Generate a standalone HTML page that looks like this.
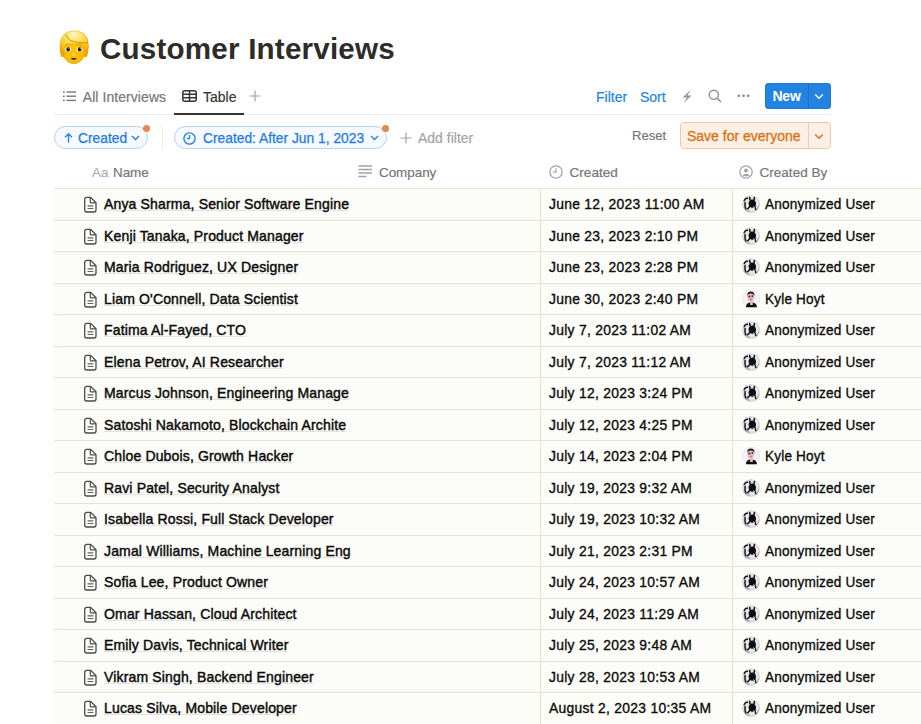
<!DOCTYPE html><html><head><meta charset="utf-8"><style>
*{margin:0;padding:0;box-sizing:border-box}
html,body{width:921px;height:724px;overflow:hidden;background:#fff}
body{position:relative;font-family:"Liberation Sans",sans-serif;color:#37352f}
.a{position:absolute;white-space:nowrap}
.title{left:100px;top:29px;font-size:29.6px;font-weight:bold;color:#2e2c28;letter-spacing:0.2px;line-height:40px}
.tab{font-size:14px;line-height:16px;top:88.5px;-webkit-text-stroke:0.2px currentColor}
.gray{color:#787774}
.blue{color:#2383e2}
.line{position:absolute;height:1px;background:#ededeb}
.pill{position:absolute;height:23px;border:1px solid #b3d3f3;background:#f6fafe;border-radius:12px}
.dot{position:absolute;width:7px;height:7px;border-radius:50%;background:#e4894a}
.ptxt{font-size:13.8px;line-height:16px;color:#1f7ade;-webkit-text-stroke:0.25px #1f7ade}
.hdr{font-size:13.4px;line-height:16px;top:165px;color:#787774;-webkit-text-stroke:0.2px currentColor}
.rowsbg{position:absolute;left:54px;width:867px;background:#fcfcf8}
.hl{position:absolute;left:54px;width:867px;height:1px;background:#e4e3da}
.vl{position:absolute;width:1px;height:600px;background:#e4e3da}
.r{position:absolute;left:0;width:921px;height:18px;font-size:14.6px;line-height:18px;color:#0b0b0b}
.r span{position:absolute;white-space:nowrap}
.pgw{left:84.2px}
.pg{display:block}
.nm{left:104px;font-size:14.8px;letter-spacing:0.15px;transform:scaleX(0.948);transform-origin:0 0;-webkit-text-stroke:0.45px #0b0b0b}
.nm u{text-decoration:underline;text-decoration-color:#e4e3dd;text-underline-offset:1.2px;text-decoration-thickness:1px}
.dt{left:549px;letter-spacing:0.3px;transform:scaleX(0.95);transform-origin:0 0;-webkit-text-stroke:0.35px #0b0b0b}
.avw{left:742.1px}
.av{display:block}
.us{left:765px;letter-spacing:0.2px;transform:scaleX(0.93);transform-origin:0 0;-webkit-text-stroke:0.35px #0b0b0b}
</style></head><body>
<svg class="a" style="left:56px;top:28px" width="36" height="38" viewBox="0 0 36 38">
<defs><radialGradient id="hg" cx="0.5" cy="0.15" r="0.75"><stop offset="0" stop-color="#fff6c8"/><stop offset="0.35" stop-color="#fde36c"/><stop offset="0.8" stop-color="#f6c21c"/><stop offset="1" stop-color="#eaa800"/></radialGradient>
<radialGradient id="fg" cx="0.5" cy="0.5" r="0.6"><stop offset="0" stop-color="#fcc400"/><stop offset="0.75" stop-color="#f7bb00"/><stop offset="1" stop-color="#e59a00"/></radialGradient></defs>
<path d="M5.2 28.5C3.6 22 3.6 16 5.3 11C7.6 5.2 12.6 2.9 18.4 2.9C24.2 2.9 29.2 5.2 31.2 10.5C33 15.5 32.6 22 30.8 28.5z" fill="#e8a300"/>
<ellipse cx="17.9" cy="21.2" rx="11.6" ry="14.6" fill="url(#fg)" stroke="#e39800" stroke-width="0.5"/>
<path d="M5.2 28.5C3.6 22 3.6 16 5.3 11C7.6 5.2 12.6 2.9 18.4 2.9C24.2 2.9 29.2 5.2 31.2 10.5C33 15.5 32.6 22 30.8 28.5L28.6 28.5C28.6 22 28.5 17.8 26.5 15.9C22 15 14 15.8 9.8 16.4C8.3 19 8 23.5 8 28.5z" fill="url(#hg)" stroke="#e7a400" stroke-width="0.4"/>
<path d="M9.8 6.6C11 9 12.6 12 16 13.2C21 14.6 27 14.8 32 15.1" stroke="#c88a00" stroke-width="1" fill="none" opacity="0.85"/>
<path d="M9.6 17.2C10.8 16.6 12.5 16.5 14 17M21.6 17C23.1 16.5 24.8 16.6 26 17.2" stroke="#e09a00" stroke-width="0.7" fill="none"/>
<ellipse cx="12.1" cy="21.6" rx="3.1" ry="2.3" fill="#fff8d8"/><ellipse cx="12.2" cy="21.4" rx="1.9" ry="2.1" fill="#1e1710"/><circle cx="12.8" cy="20.7" r="0.5" fill="#fff"/>
<ellipse cx="23.6" cy="21.6" rx="3.1" ry="2.3" fill="#fff8d8"/><ellipse cx="23.7" cy="21.4" rx="1.9" ry="2.1" fill="#1e1710"/><circle cx="24.3" cy="20.7" r="0.5" fill="#fff"/>
<ellipse cx="17.8" cy="26.4" rx="1.5" ry="1.2" fill="#fddd70"/>
<path d="M15.1 29.9h5.4c-.2 1.3-1.2 2-2.7 2s-2.5-.7-2.7-2z" fill="#4a2c0c"/>
</svg>
<div class="a title">Customer Interviews</div>
<svg class="a" style="left:63px;top:91px" width="14" height="11" viewBox="0 0 14 11"><g fill="#787774"><rect x="0" y="0.3" width="1.7" height="1.5"/><rect x="0" y="4.5" width="1.7" height="1.5"/><rect x="0" y="8.7" width="1.7" height="1.5"/><rect x="3.5" y="0.3" width="9.5" height="1.4"/><rect x="3.5" y="4.5" width="9.5" height="1.4"/><rect x="3.5" y="8.7" width="9.5" height="1.4"/></g></svg>
<div class="a tab gray" style="left:82.8px;font-size:14px;letter-spacing:0.06px">All Interviews</div>
<svg class="a" style="left:182px;top:90px" width="15" height="12" viewBox="0 0 15 12"><rect x="0.75" y="0.75" width="13.5" height="10.5" rx="2" fill="none" stroke="#37352f" stroke-width="1.5"/><path d="M1 4.3h13M1 7.7h13M7.5 1v10" stroke="#37352f" stroke-width="1.4"/></svg>
<div class="a tab" style="left:203px;color:#37352f">Table</div>
<svg class="a" style="left:249px;top:90px" width="12" height="12" viewBox="0 0 12 12"><path d="M6 0.5v11M0.5 6h11" stroke="#a5a4a0" stroke-width="1.2"/></svg>
<div class="line" style="left:54px;top:114px;width:777px"></div>
<div class="a" style="left:174px;top:113px;width:70px;height:2px;background:#37352f"></div>
<div class="a tab blue" style="left:596px">Filter</div>
<div class="a tab blue" style="left:640px">Sort</div>
<svg class="a" style="left:681px;top:88.5px" width="12" height="15" viewBox="0 0 12 15"><path d="M9.6 0.8L1.6 8.4h4.3L2.6 14.2l8-7.8H6.5z" fill="#9b9a96"/></svg>
<svg class="a" style="left:708px;top:88.7px" width="14" height="14" viewBox="0 0 14 14"><circle cx="5.8" cy="5.8" r="4.6" fill="none" stroke="#8f8e8a" stroke-width="1.4"/><path d="M9.2 9.2l3.8 3.8" stroke="#8f8e8a" stroke-width="1.5"/></svg>
<svg class="a" style="left:736px;top:94px" width="15" height="4" viewBox="0 0 15 4"><circle cx="2.9" cy="1.8" r="1.4" fill="#8f8e8a"/><circle cx="7.5" cy="1.8" r="1.4" fill="#8f8e8a"/><circle cx="12.1" cy="1.8" r="1.4" fill="#8f8e8a"/></svg>
<div class="a" style="left:765px;top:82.5px;width:65.5px;height:26.3px;background:#2383e2;border-radius:4px;box-shadow:inset 0 0 0 0.6px #1a72cf"></div>
<div class="a" style="left:808px;top:83px;width:1px;height:25.5px;background:#1f70c4"></div>
<div class="a" style="left:772.5px;top:88px;font-size:14px;line-height:16px;font-weight:bold;color:#fff;letter-spacing:-0.25px">New</div>
<svg class="a" style="left:814px;top:92.8px" width="10" height="7" viewBox="0 0 10 7"><path d="M1.2 1.5l3.8 3.8 3.8-3.8" fill="none" stroke="#fff" stroke-width="1.4"/></svg>

<div class="pill" style="left:54px;top:126px;width:94px"></div>
<div class="dot" style="left:142.5px;top:125px"></div>
<svg class="a" style="left:64px;top:132.5px" width="9" height="10" viewBox="0 0 9 10"><path d="M4.5 9.5V1M1 4.3l3.5-3.5 3.5 3.5" fill="none" stroke="#2383e2" stroke-width="1.4"/></svg>
<div class="a ptxt" style="left:78px;top:130.5px">Created</div>
<svg class="a" style="left:131px;top:135px" width="9" height="6" viewBox="0 0 9 6"><path d="M1 1l3.5 3.5L8 1" fill="none" stroke="#2383e2" stroke-width="1.3"/></svg>
<div class="a" style="left:161.5px;top:126px;width:1px;height:23px;background:#ededeb"></div>
<div class="pill" style="left:174px;top:126px;width:213px"></div>
<div class="dot" style="left:382px;top:125px"></div>
<svg class="a" style="left:183px;top:131.5px" width="13" height="13" viewBox="0 0 13 13"><circle cx="6.5" cy="6.5" r="5.6" fill="none" stroke="#2383e2" stroke-width="1.4"/><path d="M6.5 3v3.6H3.8" fill="none" stroke="#2383e2" stroke-width="1.3"/></svg>
<div class="a ptxt" style="left:203px;top:130.5px">Created: After Jun 1, 2023</div>
<svg class="a" style="left:370px;top:135px" width="9" height="6" viewBox="0 0 9 6"><path d="M1 1l3.5 3.5L8 1" fill="none" stroke="#2383e2" stroke-width="1.3"/></svg>
<svg class="a" style="left:400px;top:132px" width="12" height="12" viewBox="0 0 12 12"><path d="M6 0.5v11M0.5 6h11" stroke="#a5a4a0" stroke-width="1.2"/></svg>
<div class="a tab gray" style="left:418px;top:130px;color:#a5a4a0">Add filter</div>
<div class="a tab gray" style="left:632px;top:128px;font-size:13.1px">Reset</div>
<div class="a" style="left:680px;top:122px;width:150.5px;height:26.5px;background:#fcf0e6;border:1px solid #f3c9a5;border-radius:4px"></div>
<div class="a" style="left:808px;top:122.5px;width:1px;height:25.5px;background:#f3c9a5"></div>
<div class="a" style="left:687px;top:128px;font-size:14px;line-height:16px;color:#d9730d;-webkit-text-stroke:0.3px #d9730d">Save for everyone</div>
<svg class="a" style="left:814px;top:133px" width="10" height="7" viewBox="0 0 10 7"><path d="M1.2 1.5l3.8 3.8 3.8-3.8" fill="none" stroke="#d9730d" stroke-width="1.4"/></svg>

<div class="a hdr" style="left:92px;color:#a8a7a3;-webkit-text-stroke:0">Aa</div>
<div class="a hdr" style="left:113px">Name</div>
<svg class="a" style="left:358px;top:165px" width="15" height="13" viewBox="0 0 15 13"><path d="M0.5 1h13.5M0.5 4.5h13.5M0.5 8h13.5M0.5 11.5h8" stroke="#a5a4a0" stroke-width="1.3"/></svg>
<div class="a hdr" style="left:379px">Company</div>
<svg class="a" style="left:549px;top:165px" width="14" height="14" viewBox="0 0 14 14"><circle cx="7" cy="7" r="6.2" fill="none" stroke="#a5a4a0" stroke-width="1.3"/><path d="M7 3.2v4H4.2" fill="none" stroke="#a5a4a0" stroke-width="1.2"/></svg>
<div class="a hdr" style="left:569.5px;font-size:13.6px">Created</div>
<svg class="a" style="left:739px;top:165px" width="14" height="14" viewBox="0 0 14 14"><circle cx="7" cy="7" r="6.2" fill="none" stroke="#a5a4a0" stroke-width="1.3"/><circle cx="7" cy="5.6" r="2" fill="#a5a4a0"/><path d="M3 11.2c1-1.6 2.3-2.2 4-2.2s3 .6 4 2.2" fill="#a5a4a0"/></svg>
<div class="a hdr" style="left:759.5px;font-size:13.55px">Created By</div>

<div class="rowsbg" style="top:188.30px;height:535.70px"></div>
<div class="hl" style="top:188.30px"></div>
<div class="r" style="top:195.10px">
<span class="pgw" style="top:1.00px"><svg class="pg" width="14" height="18" viewBox="0 0 14 18"><path d="M2.7 1.35H6.7L12 6.7V14c0 1.1-.9 2-2 2H2.7c-1.1 0-2-.9-2-2V3.35c0-1.1.9-2 2-2z" fill="#fefefc" stroke="#4a4a48" stroke-width="1.3" stroke-linejoin="round"/><path d="M6.3 1.6V5.9c0 .5.4.9.9.9h4.6" fill="none" stroke="#4a4a48" stroke-width="1.2"/><path d="M3.5 9.8H9.4M3.5 12.5H9.4" stroke="#5f6166" stroke-width="1.15"/></svg></span>
<span class="nm"><u>Anya Sharma, Senior Software Engine</u></span>
<span class="dt">June 12, 2023 11:00 AM</span>
<span class="avw" style="top:0.10px"><svg class="av" width="18" height="18" viewBox="0 0 18 18"><circle cx="9" cy="9" r="8.7" fill="#c4c4c4"/><circle cx="9" cy="9" r="8" fill="#e6e6e6"/><path d="M1.8 12.5c1.5 2 3.2 3.4 6 4M14.2 15.2c1.4-1.3 2.3-2.8 2.7-4.8" stroke="#b0b0b0" stroke-width="1.3" fill="none"/><path d="M6.6 8.6c0-2.4 1.5-4.2 3.6-4.2s3.8 1.8 3.8 4.3c0 2.3-1.5 4.1-3.6 4.1S6.6 11 6.6 8.6z" fill="#0c0c0c"/><path d="M8 4.8L7.7 2.4M12.1 4.9L12.4 2.6M12.6 11l1.2 3.6M7.8 11.6L5.7 13.8" stroke="#0c0c0c" stroke-width="1.5" stroke-linecap="round"/><path d="M2.3 5.6C2.9 3.9 4 3.1 5.4 3.3M3.1 7.4C2.7 9.5 2.9 12 3.9 13.8" stroke="#151515" stroke-width="1.5" fill="none" stroke-linecap="round"/><path d="M11.2 11.5l2 1.8" stroke="#eee" stroke-width="0.9"/></svg></span>
<span class="us">Anonymized User</span>
</div>
<div class="hl" style="top:219.80px"></div>
<div class="r" style="top:226.60px">
<span class="pgw" style="top:1.00px"><svg class="pg" width="14" height="18" viewBox="0 0 14 18"><path d="M2.7 1.35H6.7L12 6.7V14c0 1.1-.9 2-2 2H2.7c-1.1 0-2-.9-2-2V3.35c0-1.1.9-2 2-2z" fill="#fefefc" stroke="#4a4a48" stroke-width="1.3" stroke-linejoin="round"/><path d="M6.3 1.6V5.9c0 .5.4.9.9.9h4.6" fill="none" stroke="#4a4a48" stroke-width="1.2"/><path d="M3.5 9.8H9.4M3.5 12.5H9.4" stroke="#5f6166" stroke-width="1.15"/></svg></span>
<span class="nm"><u>Kenji Tanaka, Product Manager</u></span>
<span class="dt">June 23, 2023 2:10 PM</span>
<span class="avw" style="top:0.10px"><svg class="av" width="18" height="18" viewBox="0 0 18 18"><circle cx="9" cy="9" r="8.7" fill="#c4c4c4"/><circle cx="9" cy="9" r="8" fill="#e6e6e6"/><path d="M1.8 12.5c1.5 2 3.2 3.4 6 4M14.2 15.2c1.4-1.3 2.3-2.8 2.7-4.8" stroke="#b0b0b0" stroke-width="1.3" fill="none"/><path d="M6.6 8.6c0-2.4 1.5-4.2 3.6-4.2s3.8 1.8 3.8 4.3c0 2.3-1.5 4.1-3.6 4.1S6.6 11 6.6 8.6z" fill="#0c0c0c"/><path d="M8 4.8L7.7 2.4M12.1 4.9L12.4 2.6M12.6 11l1.2 3.6M7.8 11.6L5.7 13.8" stroke="#0c0c0c" stroke-width="1.5" stroke-linecap="round"/><path d="M2.3 5.6C2.9 3.9 4 3.1 5.4 3.3M3.1 7.4C2.7 9.5 2.9 12 3.9 13.8" stroke="#151515" stroke-width="1.5" fill="none" stroke-linecap="round"/><path d="M11.2 11.5l2 1.8" stroke="#eee" stroke-width="0.9"/></svg></span>
<span class="us">Anonymized User</span>
</div>
<div class="hl" style="top:251.30px"></div>
<div class="r" style="top:258.10px">
<span class="pgw" style="top:1.00px"><svg class="pg" width="14" height="18" viewBox="0 0 14 18"><path d="M2.7 1.35H6.7L12 6.7V14c0 1.1-.9 2-2 2H2.7c-1.1 0-2-.9-2-2V3.35c0-1.1.9-2 2-2z" fill="#fefefc" stroke="#4a4a48" stroke-width="1.3" stroke-linejoin="round"/><path d="M6.3 1.6V5.9c0 .5.4.9.9.9h4.6" fill="none" stroke="#4a4a48" stroke-width="1.2"/><path d="M3.5 9.8H9.4M3.5 12.5H9.4" stroke="#5f6166" stroke-width="1.15"/></svg></span>
<span class="nm"><u>Maria Rodriguez, UX Designer</u></span>
<span class="dt">June 23, 2023 2:28 PM</span>
<span class="avw" style="top:0.10px"><svg class="av" width="18" height="18" viewBox="0 0 18 18"><circle cx="9" cy="9" r="8.7" fill="#c4c4c4"/><circle cx="9" cy="9" r="8" fill="#e6e6e6"/><path d="M1.8 12.5c1.5 2 3.2 3.4 6 4M14.2 15.2c1.4-1.3 2.3-2.8 2.7-4.8" stroke="#b0b0b0" stroke-width="1.3" fill="none"/><path d="M6.6 8.6c0-2.4 1.5-4.2 3.6-4.2s3.8 1.8 3.8 4.3c0 2.3-1.5 4.1-3.6 4.1S6.6 11 6.6 8.6z" fill="#0c0c0c"/><path d="M8 4.8L7.7 2.4M12.1 4.9L12.4 2.6M12.6 11l1.2 3.6M7.8 11.6L5.7 13.8" stroke="#0c0c0c" stroke-width="1.5" stroke-linecap="round"/><path d="M2.3 5.6C2.9 3.9 4 3.1 5.4 3.3M3.1 7.4C2.7 9.5 2.9 12 3.9 13.8" stroke="#151515" stroke-width="1.5" fill="none" stroke-linecap="round"/><path d="M11.2 11.5l2 1.8" stroke="#eee" stroke-width="0.9"/></svg></span>
<span class="us">Anonymized User</span>
</div>
<div class="hl" style="top:282.80px"></div>
<div class="r" style="top:289.60px">
<span class="pgw" style="top:1.00px"><svg class="pg" width="14" height="18" viewBox="0 0 14 18"><path d="M2.7 1.35H6.7L12 6.7V14c0 1.1-.9 2-2 2H2.7c-1.1 0-2-.9-2-2V3.35c0-1.1.9-2 2-2z" fill="#fefefc" stroke="#4a4a48" stroke-width="1.3" stroke-linejoin="round"/><path d="M6.3 1.6V5.9c0 .5.4.9.9.9h4.6" fill="none" stroke="#4a4a48" stroke-width="1.2"/><path d="M3.5 9.8H9.4M3.5 12.5H9.4" stroke="#5f6166" stroke-width="1.15"/></svg></span>
<span class="nm"><u>Liam O'Connell, Data Scientist</u></span>
<span class="dt">June 30, 2023 2:40 PM</span>
<span class="avw" style="top:0.10px"><svg class="av" width="18" height="18" viewBox="0 0 18 18"><circle cx="9" cy="9" r="8.8" fill="#f4f3f4" stroke="#e4e2e6" stroke-width="0.6"/><path d="M3.8 17.2c.4-2.8 1.8-4.3 4.2-4.6h2.4c2.6.3 4.2 1.8 4.6 4.6z" fill="#141010"/><rect x="8" y="11" width="2.8" height="4" fill="#e6b6bc"/><ellipse cx="8.8" cy="7" rx="3.5" ry="4.7" fill="#e9b8c0"/><path d="M5.2 6C5 3 6.6 1.6 8.8 1.6S12.8 3 12.5 6c-.6-1.6-1.9-2.6-3.7-2.6S5.8 4.4 5.2 6z" fill="#2a1a18"/><circle cx="7.4" cy="6.4" r="0.9" fill="#2a1a18"/><circle cx="10.3" cy="6.1" r="0.9" fill="#2a1a18"/><ellipse cx="9" cy="9.4" rx="1.2" ry="0.8" fill="#b57f86"/></svg></span>
<span class="us">Kyle Hoyt</span>
</div>
<div class="hl" style="top:314.30px"></div>
<div class="r" style="top:321.10px">
<span class="pgw" style="top:1.00px"><svg class="pg" width="14" height="18" viewBox="0 0 14 18"><path d="M2.7 1.35H6.7L12 6.7V14c0 1.1-.9 2-2 2H2.7c-1.1 0-2-.9-2-2V3.35c0-1.1.9-2 2-2z" fill="#fefefc" stroke="#4a4a48" stroke-width="1.3" stroke-linejoin="round"/><path d="M6.3 1.6V5.9c0 .5.4.9.9.9h4.6" fill="none" stroke="#4a4a48" stroke-width="1.2"/><path d="M3.5 9.8H9.4M3.5 12.5H9.4" stroke="#5f6166" stroke-width="1.15"/></svg></span>
<span class="nm"><u>Fatima Al-Fayed, CTO</u></span>
<span class="dt">July 7, 2023 11:02 AM</span>
<span class="avw" style="top:0.10px"><svg class="av" width="18" height="18" viewBox="0 0 18 18"><circle cx="9" cy="9" r="8.7" fill="#c4c4c4"/><circle cx="9" cy="9" r="8" fill="#e6e6e6"/><path d="M1.8 12.5c1.5 2 3.2 3.4 6 4M14.2 15.2c1.4-1.3 2.3-2.8 2.7-4.8" stroke="#b0b0b0" stroke-width="1.3" fill="none"/><path d="M6.6 8.6c0-2.4 1.5-4.2 3.6-4.2s3.8 1.8 3.8 4.3c0 2.3-1.5 4.1-3.6 4.1S6.6 11 6.6 8.6z" fill="#0c0c0c"/><path d="M8 4.8L7.7 2.4M12.1 4.9L12.4 2.6M12.6 11l1.2 3.6M7.8 11.6L5.7 13.8" stroke="#0c0c0c" stroke-width="1.5" stroke-linecap="round"/><path d="M2.3 5.6C2.9 3.9 4 3.1 5.4 3.3M3.1 7.4C2.7 9.5 2.9 12 3.9 13.8" stroke="#151515" stroke-width="1.5" fill="none" stroke-linecap="round"/><path d="M11.2 11.5l2 1.8" stroke="#eee" stroke-width="0.9"/></svg></span>
<span class="us">Anonymized User</span>
</div>
<div class="hl" style="top:345.80px"></div>
<div class="r" style="top:352.60px">
<span class="pgw" style="top:1.00px"><svg class="pg" width="14" height="18" viewBox="0 0 14 18"><path d="M2.7 1.35H6.7L12 6.7V14c0 1.1-.9 2-2 2H2.7c-1.1 0-2-.9-2-2V3.35c0-1.1.9-2 2-2z" fill="#fefefc" stroke="#4a4a48" stroke-width="1.3" stroke-linejoin="round"/><path d="M6.3 1.6V5.9c0 .5.4.9.9.9h4.6" fill="none" stroke="#4a4a48" stroke-width="1.2"/><path d="M3.5 9.8H9.4M3.5 12.5H9.4" stroke="#5f6166" stroke-width="1.15"/></svg></span>
<span class="nm"><u>Elena Petrov, AI Researcher</u></span>
<span class="dt">July 7, 2023 11:12 AM</span>
<span class="avw" style="top:0.10px"><svg class="av" width="18" height="18" viewBox="0 0 18 18"><circle cx="9" cy="9" r="8.7" fill="#c4c4c4"/><circle cx="9" cy="9" r="8" fill="#e6e6e6"/><path d="M1.8 12.5c1.5 2 3.2 3.4 6 4M14.2 15.2c1.4-1.3 2.3-2.8 2.7-4.8" stroke="#b0b0b0" stroke-width="1.3" fill="none"/><path d="M6.6 8.6c0-2.4 1.5-4.2 3.6-4.2s3.8 1.8 3.8 4.3c0 2.3-1.5 4.1-3.6 4.1S6.6 11 6.6 8.6z" fill="#0c0c0c"/><path d="M8 4.8L7.7 2.4M12.1 4.9L12.4 2.6M12.6 11l1.2 3.6M7.8 11.6L5.7 13.8" stroke="#0c0c0c" stroke-width="1.5" stroke-linecap="round"/><path d="M2.3 5.6C2.9 3.9 4 3.1 5.4 3.3M3.1 7.4C2.7 9.5 2.9 12 3.9 13.8" stroke="#151515" stroke-width="1.5" fill="none" stroke-linecap="round"/><path d="M11.2 11.5l2 1.8" stroke="#eee" stroke-width="0.9"/></svg></span>
<span class="us">Anonymized User</span>
</div>
<div class="hl" style="top:377.30px"></div>
<div class="r" style="top:384.10px">
<span class="pgw" style="top:1.00px"><svg class="pg" width="14" height="18" viewBox="0 0 14 18"><path d="M2.7 1.35H6.7L12 6.7V14c0 1.1-.9 2-2 2H2.7c-1.1 0-2-.9-2-2V3.35c0-1.1.9-2 2-2z" fill="#fefefc" stroke="#4a4a48" stroke-width="1.3" stroke-linejoin="round"/><path d="M6.3 1.6V5.9c0 .5.4.9.9.9h4.6" fill="none" stroke="#4a4a48" stroke-width="1.2"/><path d="M3.5 9.8H9.4M3.5 12.5H9.4" stroke="#5f6166" stroke-width="1.15"/></svg></span>
<span class="nm"><u>Marcus Johnson, Engineering Manage</u></span>
<span class="dt">July 12, 2023 3:24 PM</span>
<span class="avw" style="top:0.10px"><svg class="av" width="18" height="18" viewBox="0 0 18 18"><circle cx="9" cy="9" r="8.7" fill="#c4c4c4"/><circle cx="9" cy="9" r="8" fill="#e6e6e6"/><path d="M1.8 12.5c1.5 2 3.2 3.4 6 4M14.2 15.2c1.4-1.3 2.3-2.8 2.7-4.8" stroke="#b0b0b0" stroke-width="1.3" fill="none"/><path d="M6.6 8.6c0-2.4 1.5-4.2 3.6-4.2s3.8 1.8 3.8 4.3c0 2.3-1.5 4.1-3.6 4.1S6.6 11 6.6 8.6z" fill="#0c0c0c"/><path d="M8 4.8L7.7 2.4M12.1 4.9L12.4 2.6M12.6 11l1.2 3.6M7.8 11.6L5.7 13.8" stroke="#0c0c0c" stroke-width="1.5" stroke-linecap="round"/><path d="M2.3 5.6C2.9 3.9 4 3.1 5.4 3.3M3.1 7.4C2.7 9.5 2.9 12 3.9 13.8" stroke="#151515" stroke-width="1.5" fill="none" stroke-linecap="round"/><path d="M11.2 11.5l2 1.8" stroke="#eee" stroke-width="0.9"/></svg></span>
<span class="us">Anonymized User</span>
</div>
<div class="hl" style="top:408.80px"></div>
<div class="r" style="top:415.60px">
<span class="pgw" style="top:1.00px"><svg class="pg" width="14" height="18" viewBox="0 0 14 18"><path d="M2.7 1.35H6.7L12 6.7V14c0 1.1-.9 2-2 2H2.7c-1.1 0-2-.9-2-2V3.35c0-1.1.9-2 2-2z" fill="#fefefc" stroke="#4a4a48" stroke-width="1.3" stroke-linejoin="round"/><path d="M6.3 1.6V5.9c0 .5.4.9.9.9h4.6" fill="none" stroke="#4a4a48" stroke-width="1.2"/><path d="M3.5 9.8H9.4M3.5 12.5H9.4" stroke="#5f6166" stroke-width="1.15"/></svg></span>
<span class="nm"><u>Satoshi Nakamoto, Blockchain Archite</u></span>
<span class="dt">July 12, 2023 4:25 PM</span>
<span class="avw" style="top:0.10px"><svg class="av" width="18" height="18" viewBox="0 0 18 18"><circle cx="9" cy="9" r="8.7" fill="#c4c4c4"/><circle cx="9" cy="9" r="8" fill="#e6e6e6"/><path d="M1.8 12.5c1.5 2 3.2 3.4 6 4M14.2 15.2c1.4-1.3 2.3-2.8 2.7-4.8" stroke="#b0b0b0" stroke-width="1.3" fill="none"/><path d="M6.6 8.6c0-2.4 1.5-4.2 3.6-4.2s3.8 1.8 3.8 4.3c0 2.3-1.5 4.1-3.6 4.1S6.6 11 6.6 8.6z" fill="#0c0c0c"/><path d="M8 4.8L7.7 2.4M12.1 4.9L12.4 2.6M12.6 11l1.2 3.6M7.8 11.6L5.7 13.8" stroke="#0c0c0c" stroke-width="1.5" stroke-linecap="round"/><path d="M2.3 5.6C2.9 3.9 4 3.1 5.4 3.3M3.1 7.4C2.7 9.5 2.9 12 3.9 13.8" stroke="#151515" stroke-width="1.5" fill="none" stroke-linecap="round"/><path d="M11.2 11.5l2 1.8" stroke="#eee" stroke-width="0.9"/></svg></span>
<span class="us">Anonymized User</span>
</div>
<div class="hl" style="top:440.30px"></div>
<div class="r" style="top:447.10px">
<span class="pgw" style="top:1.00px"><svg class="pg" width="14" height="18" viewBox="0 0 14 18"><path d="M2.7 1.35H6.7L12 6.7V14c0 1.1-.9 2-2 2H2.7c-1.1 0-2-.9-2-2V3.35c0-1.1.9-2 2-2z" fill="#fefefc" stroke="#4a4a48" stroke-width="1.3" stroke-linejoin="round"/><path d="M6.3 1.6V5.9c0 .5.4.9.9.9h4.6" fill="none" stroke="#4a4a48" stroke-width="1.2"/><path d="M3.5 9.8H9.4M3.5 12.5H9.4" stroke="#5f6166" stroke-width="1.15"/></svg></span>
<span class="nm"><u>Chloe Dubois, Growth Hacker</u></span>
<span class="dt">July 14, 2023 2:04 PM</span>
<span class="avw" style="top:0.10px"><svg class="av" width="18" height="18" viewBox="0 0 18 18"><circle cx="9" cy="9" r="8.8" fill="#f4f3f4" stroke="#e4e2e6" stroke-width="0.6"/><path d="M3.8 17.2c.4-2.8 1.8-4.3 4.2-4.6h2.4c2.6.3 4.2 1.8 4.6 4.6z" fill="#141010"/><rect x="8" y="11" width="2.8" height="4" fill="#e6b6bc"/><ellipse cx="8.8" cy="7" rx="3.5" ry="4.7" fill="#e9b8c0"/><path d="M5.2 6C5 3 6.6 1.6 8.8 1.6S12.8 3 12.5 6c-.6-1.6-1.9-2.6-3.7-2.6S5.8 4.4 5.2 6z" fill="#2a1a18"/><circle cx="7.4" cy="6.4" r="0.9" fill="#2a1a18"/><circle cx="10.3" cy="6.1" r="0.9" fill="#2a1a18"/><ellipse cx="9" cy="9.4" rx="1.2" ry="0.8" fill="#b57f86"/></svg></span>
<span class="us">Kyle Hoyt</span>
</div>
<div class="hl" style="top:471.80px"></div>
<div class="r" style="top:478.60px">
<span class="pgw" style="top:1.00px"><svg class="pg" width="14" height="18" viewBox="0 0 14 18"><path d="M2.7 1.35H6.7L12 6.7V14c0 1.1-.9 2-2 2H2.7c-1.1 0-2-.9-2-2V3.35c0-1.1.9-2 2-2z" fill="#fefefc" stroke="#4a4a48" stroke-width="1.3" stroke-linejoin="round"/><path d="M6.3 1.6V5.9c0 .5.4.9.9.9h4.6" fill="none" stroke="#4a4a48" stroke-width="1.2"/><path d="M3.5 9.8H9.4M3.5 12.5H9.4" stroke="#5f6166" stroke-width="1.15"/></svg></span>
<span class="nm"><u>Ravi Patel, Security Analyst</u></span>
<span class="dt">July 19, 2023 9:32 AM</span>
<span class="avw" style="top:0.10px"><svg class="av" width="18" height="18" viewBox="0 0 18 18"><circle cx="9" cy="9" r="8.7" fill="#c4c4c4"/><circle cx="9" cy="9" r="8" fill="#e6e6e6"/><path d="M1.8 12.5c1.5 2 3.2 3.4 6 4M14.2 15.2c1.4-1.3 2.3-2.8 2.7-4.8" stroke="#b0b0b0" stroke-width="1.3" fill="none"/><path d="M6.6 8.6c0-2.4 1.5-4.2 3.6-4.2s3.8 1.8 3.8 4.3c0 2.3-1.5 4.1-3.6 4.1S6.6 11 6.6 8.6z" fill="#0c0c0c"/><path d="M8 4.8L7.7 2.4M12.1 4.9L12.4 2.6M12.6 11l1.2 3.6M7.8 11.6L5.7 13.8" stroke="#0c0c0c" stroke-width="1.5" stroke-linecap="round"/><path d="M2.3 5.6C2.9 3.9 4 3.1 5.4 3.3M3.1 7.4C2.7 9.5 2.9 12 3.9 13.8" stroke="#151515" stroke-width="1.5" fill="none" stroke-linecap="round"/><path d="M11.2 11.5l2 1.8" stroke="#eee" stroke-width="0.9"/></svg></span>
<span class="us">Anonymized User</span>
</div>
<div class="hl" style="top:503.30px"></div>
<div class="r" style="top:510.10px">
<span class="pgw" style="top:1.00px"><svg class="pg" width="14" height="18" viewBox="0 0 14 18"><path d="M2.7 1.35H6.7L12 6.7V14c0 1.1-.9 2-2 2H2.7c-1.1 0-2-.9-2-2V3.35c0-1.1.9-2 2-2z" fill="#fefefc" stroke="#4a4a48" stroke-width="1.3" stroke-linejoin="round"/><path d="M6.3 1.6V5.9c0 .5.4.9.9.9h4.6" fill="none" stroke="#4a4a48" stroke-width="1.2"/><path d="M3.5 9.8H9.4M3.5 12.5H9.4" stroke="#5f6166" stroke-width="1.15"/></svg></span>
<span class="nm"><u>Isabella Rossi, Full Stack Developer</u></span>
<span class="dt">July 19, 2023 10:32 AM</span>
<span class="avw" style="top:0.10px"><svg class="av" width="18" height="18" viewBox="0 0 18 18"><circle cx="9" cy="9" r="8.7" fill="#c4c4c4"/><circle cx="9" cy="9" r="8" fill="#e6e6e6"/><path d="M1.8 12.5c1.5 2 3.2 3.4 6 4M14.2 15.2c1.4-1.3 2.3-2.8 2.7-4.8" stroke="#b0b0b0" stroke-width="1.3" fill="none"/><path d="M6.6 8.6c0-2.4 1.5-4.2 3.6-4.2s3.8 1.8 3.8 4.3c0 2.3-1.5 4.1-3.6 4.1S6.6 11 6.6 8.6z" fill="#0c0c0c"/><path d="M8 4.8L7.7 2.4M12.1 4.9L12.4 2.6M12.6 11l1.2 3.6M7.8 11.6L5.7 13.8" stroke="#0c0c0c" stroke-width="1.5" stroke-linecap="round"/><path d="M2.3 5.6C2.9 3.9 4 3.1 5.4 3.3M3.1 7.4C2.7 9.5 2.9 12 3.9 13.8" stroke="#151515" stroke-width="1.5" fill="none" stroke-linecap="round"/><path d="M11.2 11.5l2 1.8" stroke="#eee" stroke-width="0.9"/></svg></span>
<span class="us">Anonymized User</span>
</div>
<div class="hl" style="top:534.80px"></div>
<div class="r" style="top:541.60px">
<span class="pgw" style="top:1.00px"><svg class="pg" width="14" height="18" viewBox="0 0 14 18"><path d="M2.7 1.35H6.7L12 6.7V14c0 1.1-.9 2-2 2H2.7c-1.1 0-2-.9-2-2V3.35c0-1.1.9-2 2-2z" fill="#fefefc" stroke="#4a4a48" stroke-width="1.3" stroke-linejoin="round"/><path d="M6.3 1.6V5.9c0 .5.4.9.9.9h4.6" fill="none" stroke="#4a4a48" stroke-width="1.2"/><path d="M3.5 9.8H9.4M3.5 12.5H9.4" stroke="#5f6166" stroke-width="1.15"/></svg></span>
<span class="nm"><u>Jamal Williams, Machine Learning Eng</u></span>
<span class="dt">July 21, 2023 2:31 PM</span>
<span class="avw" style="top:0.10px"><svg class="av" width="18" height="18" viewBox="0 0 18 18"><circle cx="9" cy="9" r="8.7" fill="#c4c4c4"/><circle cx="9" cy="9" r="8" fill="#e6e6e6"/><path d="M1.8 12.5c1.5 2 3.2 3.4 6 4M14.2 15.2c1.4-1.3 2.3-2.8 2.7-4.8" stroke="#b0b0b0" stroke-width="1.3" fill="none"/><path d="M6.6 8.6c0-2.4 1.5-4.2 3.6-4.2s3.8 1.8 3.8 4.3c0 2.3-1.5 4.1-3.6 4.1S6.6 11 6.6 8.6z" fill="#0c0c0c"/><path d="M8 4.8L7.7 2.4M12.1 4.9L12.4 2.6M12.6 11l1.2 3.6M7.8 11.6L5.7 13.8" stroke="#0c0c0c" stroke-width="1.5" stroke-linecap="round"/><path d="M2.3 5.6C2.9 3.9 4 3.1 5.4 3.3M3.1 7.4C2.7 9.5 2.9 12 3.9 13.8" stroke="#151515" stroke-width="1.5" fill="none" stroke-linecap="round"/><path d="M11.2 11.5l2 1.8" stroke="#eee" stroke-width="0.9"/></svg></span>
<span class="us">Anonymized User</span>
</div>
<div class="hl" style="top:566.30px"></div>
<div class="r" style="top:573.10px">
<span class="pgw" style="top:1.00px"><svg class="pg" width="14" height="18" viewBox="0 0 14 18"><path d="M2.7 1.35H6.7L12 6.7V14c0 1.1-.9 2-2 2H2.7c-1.1 0-2-.9-2-2V3.35c0-1.1.9-2 2-2z" fill="#fefefc" stroke="#4a4a48" stroke-width="1.3" stroke-linejoin="round"/><path d="M6.3 1.6V5.9c0 .5.4.9.9.9h4.6" fill="none" stroke="#4a4a48" stroke-width="1.2"/><path d="M3.5 9.8H9.4M3.5 12.5H9.4" stroke="#5f6166" stroke-width="1.15"/></svg></span>
<span class="nm"><u>Sofia Lee, Product Owner</u></span>
<span class="dt">July 24, 2023 10:57 AM</span>
<span class="avw" style="top:0.10px"><svg class="av" width="18" height="18" viewBox="0 0 18 18"><circle cx="9" cy="9" r="8.7" fill="#c4c4c4"/><circle cx="9" cy="9" r="8" fill="#e6e6e6"/><path d="M1.8 12.5c1.5 2 3.2 3.4 6 4M14.2 15.2c1.4-1.3 2.3-2.8 2.7-4.8" stroke="#b0b0b0" stroke-width="1.3" fill="none"/><path d="M6.6 8.6c0-2.4 1.5-4.2 3.6-4.2s3.8 1.8 3.8 4.3c0 2.3-1.5 4.1-3.6 4.1S6.6 11 6.6 8.6z" fill="#0c0c0c"/><path d="M8 4.8L7.7 2.4M12.1 4.9L12.4 2.6M12.6 11l1.2 3.6M7.8 11.6L5.7 13.8" stroke="#0c0c0c" stroke-width="1.5" stroke-linecap="round"/><path d="M2.3 5.6C2.9 3.9 4 3.1 5.4 3.3M3.1 7.4C2.7 9.5 2.9 12 3.9 13.8" stroke="#151515" stroke-width="1.5" fill="none" stroke-linecap="round"/><path d="M11.2 11.5l2 1.8" stroke="#eee" stroke-width="0.9"/></svg></span>
<span class="us">Anonymized User</span>
</div>
<div class="hl" style="top:597.80px"></div>
<div class="r" style="top:604.60px">
<span class="pgw" style="top:1.00px"><svg class="pg" width="14" height="18" viewBox="0 0 14 18"><path d="M2.7 1.35H6.7L12 6.7V14c0 1.1-.9 2-2 2H2.7c-1.1 0-2-.9-2-2V3.35c0-1.1.9-2 2-2z" fill="#fefefc" stroke="#4a4a48" stroke-width="1.3" stroke-linejoin="round"/><path d="M6.3 1.6V5.9c0 .5.4.9.9.9h4.6" fill="none" stroke="#4a4a48" stroke-width="1.2"/><path d="M3.5 9.8H9.4M3.5 12.5H9.4" stroke="#5f6166" stroke-width="1.15"/></svg></span>
<span class="nm"><u>Omar Hassan, Cloud Architect</u></span>
<span class="dt">July 24, 2023 11:29 AM</span>
<span class="avw" style="top:0.10px"><svg class="av" width="18" height="18" viewBox="0 0 18 18"><circle cx="9" cy="9" r="8.7" fill="#c4c4c4"/><circle cx="9" cy="9" r="8" fill="#e6e6e6"/><path d="M1.8 12.5c1.5 2 3.2 3.4 6 4M14.2 15.2c1.4-1.3 2.3-2.8 2.7-4.8" stroke="#b0b0b0" stroke-width="1.3" fill="none"/><path d="M6.6 8.6c0-2.4 1.5-4.2 3.6-4.2s3.8 1.8 3.8 4.3c0 2.3-1.5 4.1-3.6 4.1S6.6 11 6.6 8.6z" fill="#0c0c0c"/><path d="M8 4.8L7.7 2.4M12.1 4.9L12.4 2.6M12.6 11l1.2 3.6M7.8 11.6L5.7 13.8" stroke="#0c0c0c" stroke-width="1.5" stroke-linecap="round"/><path d="M2.3 5.6C2.9 3.9 4 3.1 5.4 3.3M3.1 7.4C2.7 9.5 2.9 12 3.9 13.8" stroke="#151515" stroke-width="1.5" fill="none" stroke-linecap="round"/><path d="M11.2 11.5l2 1.8" stroke="#eee" stroke-width="0.9"/></svg></span>
<span class="us">Anonymized User</span>
</div>
<div class="hl" style="top:629.30px"></div>
<div class="r" style="top:636.10px">
<span class="pgw" style="top:1.00px"><svg class="pg" width="14" height="18" viewBox="0 0 14 18"><path d="M2.7 1.35H6.7L12 6.7V14c0 1.1-.9 2-2 2H2.7c-1.1 0-2-.9-2-2V3.35c0-1.1.9-2 2-2z" fill="#fefefc" stroke="#4a4a48" stroke-width="1.3" stroke-linejoin="round"/><path d="M6.3 1.6V5.9c0 .5.4.9.9.9h4.6" fill="none" stroke="#4a4a48" stroke-width="1.2"/><path d="M3.5 9.8H9.4M3.5 12.5H9.4" stroke="#5f6166" stroke-width="1.15"/></svg></span>
<span class="nm"><u>Emily Davis, Technical Writer</u></span>
<span class="dt">July 25, 2023 9:48 AM</span>
<span class="avw" style="top:0.10px"><svg class="av" width="18" height="18" viewBox="0 0 18 18"><circle cx="9" cy="9" r="8.7" fill="#c4c4c4"/><circle cx="9" cy="9" r="8" fill="#e6e6e6"/><path d="M1.8 12.5c1.5 2 3.2 3.4 6 4M14.2 15.2c1.4-1.3 2.3-2.8 2.7-4.8" stroke="#b0b0b0" stroke-width="1.3" fill="none"/><path d="M6.6 8.6c0-2.4 1.5-4.2 3.6-4.2s3.8 1.8 3.8 4.3c0 2.3-1.5 4.1-3.6 4.1S6.6 11 6.6 8.6z" fill="#0c0c0c"/><path d="M8 4.8L7.7 2.4M12.1 4.9L12.4 2.6M12.6 11l1.2 3.6M7.8 11.6L5.7 13.8" stroke="#0c0c0c" stroke-width="1.5" stroke-linecap="round"/><path d="M2.3 5.6C2.9 3.9 4 3.1 5.4 3.3M3.1 7.4C2.7 9.5 2.9 12 3.9 13.8" stroke="#151515" stroke-width="1.5" fill="none" stroke-linecap="round"/><path d="M11.2 11.5l2 1.8" stroke="#eee" stroke-width="0.9"/></svg></span>
<span class="us">Anonymized User</span>
</div>
<div class="hl" style="top:660.80px"></div>
<div class="r" style="top:667.60px">
<span class="pgw" style="top:1.00px"><svg class="pg" width="14" height="18" viewBox="0 0 14 18"><path d="M2.7 1.35H6.7L12 6.7V14c0 1.1-.9 2-2 2H2.7c-1.1 0-2-.9-2-2V3.35c0-1.1.9-2 2-2z" fill="#fefefc" stroke="#4a4a48" stroke-width="1.3" stroke-linejoin="round"/><path d="M6.3 1.6V5.9c0 .5.4.9.9.9h4.6" fill="none" stroke="#4a4a48" stroke-width="1.2"/><path d="M3.5 9.8H9.4M3.5 12.5H9.4" stroke="#5f6166" stroke-width="1.15"/></svg></span>
<span class="nm"><u>Vikram Singh, Backend Engineer</u></span>
<span class="dt">July 28, 2023 10:53 AM</span>
<span class="avw" style="top:0.10px"><svg class="av" width="18" height="18" viewBox="0 0 18 18"><circle cx="9" cy="9" r="8.7" fill="#c4c4c4"/><circle cx="9" cy="9" r="8" fill="#e6e6e6"/><path d="M1.8 12.5c1.5 2 3.2 3.4 6 4M14.2 15.2c1.4-1.3 2.3-2.8 2.7-4.8" stroke="#b0b0b0" stroke-width="1.3" fill="none"/><path d="M6.6 8.6c0-2.4 1.5-4.2 3.6-4.2s3.8 1.8 3.8 4.3c0 2.3-1.5 4.1-3.6 4.1S6.6 11 6.6 8.6z" fill="#0c0c0c"/><path d="M8 4.8L7.7 2.4M12.1 4.9L12.4 2.6M12.6 11l1.2 3.6M7.8 11.6L5.7 13.8" stroke="#0c0c0c" stroke-width="1.5" stroke-linecap="round"/><path d="M2.3 5.6C2.9 3.9 4 3.1 5.4 3.3M3.1 7.4C2.7 9.5 2.9 12 3.9 13.8" stroke="#151515" stroke-width="1.5" fill="none" stroke-linecap="round"/><path d="M11.2 11.5l2 1.8" stroke="#eee" stroke-width="0.9"/></svg></span>
<span class="us">Anonymized User</span>
</div>
<div class="hl" style="top:692.30px"></div>
<div class="r" style="top:699.10px">
<span class="pgw" style="top:1.00px"><svg class="pg" width="14" height="18" viewBox="0 0 14 18"><path d="M2.7 1.35H6.7L12 6.7V14c0 1.1-.9 2-2 2H2.7c-1.1 0-2-.9-2-2V3.35c0-1.1.9-2 2-2z" fill="#fefefc" stroke="#4a4a48" stroke-width="1.3" stroke-linejoin="round"/><path d="M6.3 1.6V5.9c0 .5.4.9.9.9h4.6" fill="none" stroke="#4a4a48" stroke-width="1.2"/><path d="M3.5 9.8H9.4M3.5 12.5H9.4" stroke="#5f6166" stroke-width="1.15"/></svg></span>
<span class="nm"><u>Lucas Silva, Mobile Developer</u></span>
<span class="dt">August 2, 2023 10:35 AM</span>
<span class="avw" style="top:0.10px"><svg class="av" width="18" height="18" viewBox="0 0 18 18"><circle cx="9" cy="9" r="8.7" fill="#c4c4c4"/><circle cx="9" cy="9" r="8" fill="#e6e6e6"/><path d="M1.8 12.5c1.5 2 3.2 3.4 6 4M14.2 15.2c1.4-1.3 2.3-2.8 2.7-4.8" stroke="#b0b0b0" stroke-width="1.3" fill="none"/><path d="M6.6 8.6c0-2.4 1.5-4.2 3.6-4.2s3.8 1.8 3.8 4.3c0 2.3-1.5 4.1-3.6 4.1S6.6 11 6.6 8.6z" fill="#0c0c0c"/><path d="M8 4.8L7.7 2.4M12.1 4.9L12.4 2.6M12.6 11l1.2 3.6M7.8 11.6L5.7 13.8" stroke="#0c0c0c" stroke-width="1.5" stroke-linecap="round"/><path d="M2.3 5.6C2.9 3.9 4 3.1 5.4 3.3M3.1 7.4C2.7 9.5 2.9 12 3.9 13.8" stroke="#151515" stroke-width="1.5" fill="none" stroke-linecap="round"/><path d="M11.2 11.5l2 1.8" stroke="#eee" stroke-width="0.9"/></svg></span>
<span class="us">Anonymized User</span>
</div>
<div class="vl" style="left:540px;top:188.30px"></div>
<div class="vl" style="left:732px;top:188.30px"></div>
</body></html>
